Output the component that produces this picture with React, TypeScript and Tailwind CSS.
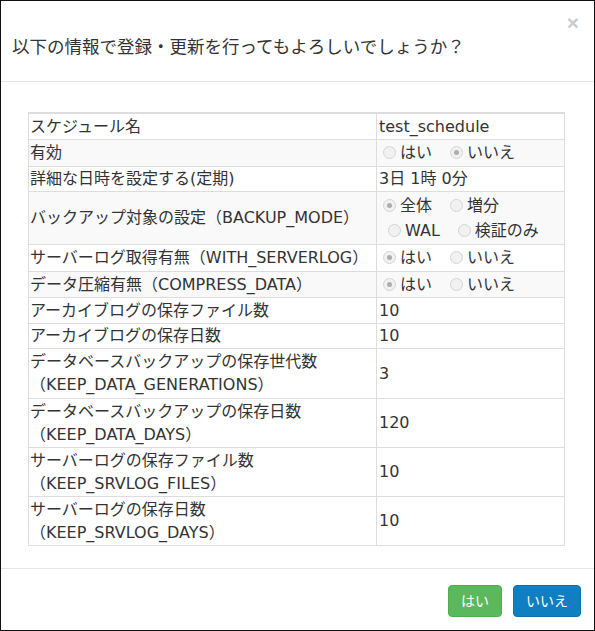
import React from 'react';

type Opt = { label: string; checked: boolean };

function Radio({ checked }: { checked: boolean }) {
    return (
        <span className="w-[13px] h-[13px] rounded-full border border-[#d4d4d4] bg-[#f1f1f1] flex items-center justify-center flex-shrink-0">
            {checked && <span className="w-[5px] h-[5px] rounded-full bg-[#adadad]" />}
        </span>
    );
}

function RadioLine({ opts, indent }: { opts: Opt[]; indent?: boolean }) {
    return (
        <div className={`flex items-center gap-[18px] leading-[25px] ${indent ? 'pl-[9px]' : 'pl-[4px]'}`}>
            {opts.map((o) => (
                <span key={o.label} className="flex items-center gap-[4px]">
                    <Radio checked={o.checked} />
                    <span>{o.label}</span>
                </span>
            ))}
        </div>
    );
}

const yesNo = (yes: boolean): Opt[] => [
    { label: 'はい', checked: yes },
    { label: 'いいえ', checked: !yes },
];

type Row = { label: React.ReactNode; value: React.ReactNode; striped?: boolean; h: string };

const rows: Row[] = [
    { label: 'スケジュール名', value: 'test_schedule', h: 'h-[26px]' },
    { label: '有効', value: <RadioLine opts={yesNo(false)} />, striped: true, h: 'h-[27px]' },
    { label: '詳細な日時を設定する(定期)', value: '3日 1時 0分', h: 'h-[25px]' },
    {
        label: 'バックアップ対象の設定（BACKUP_MODE）',
        value: (
            <>
                <RadioLine opts={[{ label: '全体', checked: true }, { label: '増分', checked: false }]} />
                <RadioLine indent opts={[{ label: 'WAL', checked: false }, { label: '検証のみ', checked: false }]} />
            </>
        ),
        striped: true,
        h: 'h-[53px]',
    },
    { label: 'サーバーログ取得有無（WITH_SERVERLOG）', value: <RadioLine opts={yesNo(true)} />, h: 'h-[27px]' },
    { label: 'データ圧縮有無（COMPRESS_DATA）', value: <RadioLine opts={yesNo(true)} />, striped: true, h: 'h-[26px]' },
    { label: 'アーカイブログの保存ファイル数', value: '10', h: 'h-[26px]' },
    { label: 'アーカイブログの保存日数', value: '10', h: 'h-[25px]' },
    { label: <>データベースバックアップの保存世代数<br />（KEEP_DATA_GENERATIONS）</>, value: '3', h: 'h-[50px]' },
    { label: <>データベースバックアップの保存日数<br />（KEEP_DATA_DAYS）</>, value: '120', h: 'h-[49px]' },
    { label: <>サーバーログの保存ファイル数<br />（KEEP_SRVLOG_FILES）</>, value: '10', h: 'h-[49px]' },
    { label: <>サーバーログの保存日数<br />（KEEP_SRVLOG_DAYS）</>, value: '10', h: 'h-[49px]' },
];

export default function App() {
    return (
        <div className="w-[595px] h-[631px] bg-white border border-[#111] flex flex-col text-[#333] font-['DejaVu_Sans','Noto_Sans_CJK_JP',sans-serif]">
            {/* Header */}
            <div className="h-[81px] border-b border-[#e5e5e5] pt-[11px] pl-[11px] pr-[15px] flex flex-col">
                <div className="h-[22px] flex justify-end">
                    <span className="text-[21px] leading-[22px] font-bold text-[#cbcbcb] font-['Liberation_Sans',sans-serif]">×</span>
                </div>
                <h1 className="text-[17.5px] leading-[26px] font-normal text-[#333]">
                    以下の情報で登録・更新を行ってもよろしいでしょうか？
                </h1>
            </div>

            {/* Body */}
            <div className="flex-1 pt-[30px] pl-[27px] pr-[29px]">
                <table className="w-full border-collapse border border-[#ddd] border-t-2 text-[16px]">
                    <tbody>
                        {rows.map((r, i) => (
                            <tr key={i} className={`${r.h} border-b border-[#ddd] ${r.striped ? 'bg-[#f9f9f9]' : 'bg-white'}`}>
                                <td className="w-[348px] border-r border-[#ddd] pl-px py-0 leading-[23px] align-middle">{r.label}</td>
                                <td className="pl-[2px] py-0 leading-[23px] align-middle">{r.value}</td>
                            </tr>
                        ))}
                    </tbody>
                </table>
            </div>

            {/* Footer */}
            <div className="h-[62px] border-t border-[#e5e5e5] pt-[16px] pr-[13px] flex justify-end items-start gap-[11px]">
                <button className="h-8 px-[12px] rounded-[4px] bg-[#5cb85c] border border-[#4cae4c] text-white text-[14px]">はい</button>
                <button className="h-8 px-[12px] rounded-[4px] bg-[#0f7fc2] border border-[#0d72ae] text-white text-[14px]">いいえ</button>
            </div>
        </div>
    );
}
